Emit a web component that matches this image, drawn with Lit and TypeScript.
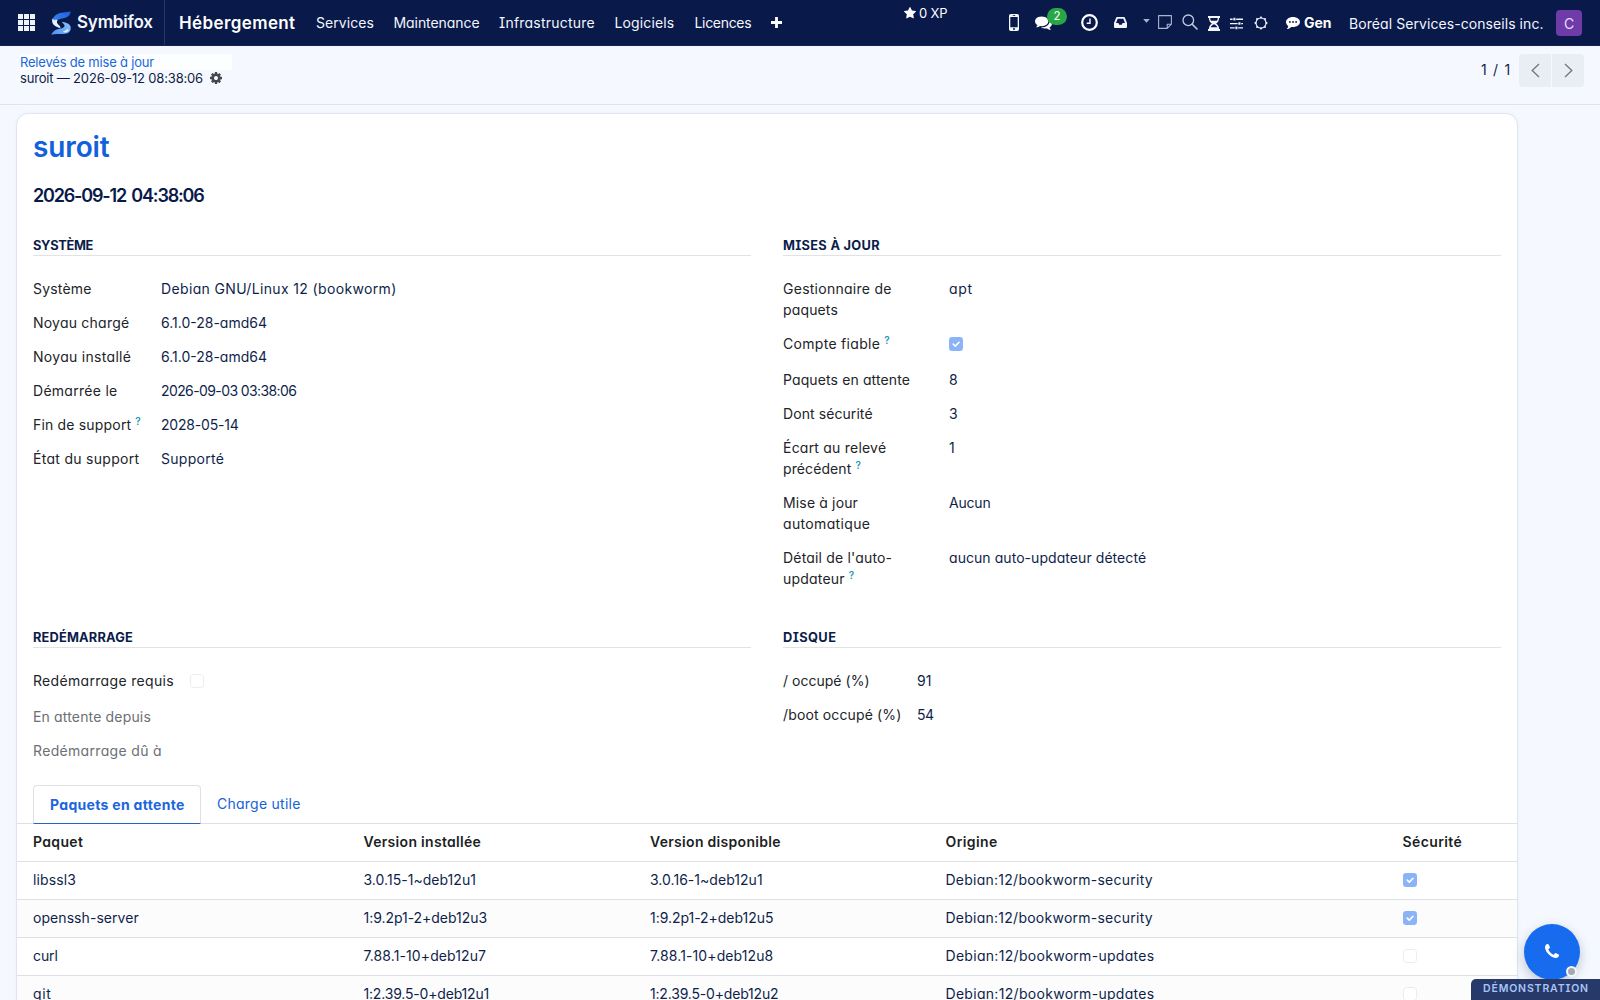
import { LitElement, html, css, svg, nothing, TemplateResult } from "lit";
import { customElement, property } from "lit/decorators.js";
import { styleMap } from "lit/directives/style-map.js";

/** A run of text with its own tracking, in pixels. */
type Run = [text: string, tracking: number];
interface Field { label: Run[]; value?: Run; check?: boolean; help?: boolean; muted?: boolean; }

const run = ([text, tracking]: Run) =>
  html`<span style=${styleMap({ letterSpacing: `${tracking}px` })}>${text}</span>`;

const SYSTEM: Field[] = [
  { label: [["Système", 0.2]], value: ["Debian GNU/Linux 12 (bookworm)", 0.36] },
  { label: [["Noyau chargé", 0.22]], value: ["6.1.0-28-amd64", 0] },
  { label: [["Noyau installé", 0.3]], value: ["6.1.0-28-amd64", 0] },
  { label: [["Démarrée le", 0.28]], value: ["2026-09-03 03:38:06", -0.6] },
  { label: [["Fin de support", 0.18]], value: ["2028-05-14", -0.2], help: true },
  { label: [["État du support", 0.29]], value: ["Supporté", 0.3] },
];
const UPDATES: Field[] = [
  { label: [["Gestionnaire de", 0.26], ["paquets", 0.14]], value: ["apt", 0.7] },
  { label: [["Compte fiable", 0.3]], check: true, help: true },
  { label: [["Paquets en attente", 0.12]], value: ["8", 0] },
  { label: [["Dont sécurité", 0.08]], value: ["3", 0] },
  { label: [["Écart au relevé", 0.22], ["précédent", 0.1]], value: ["1", 0], help: true },
  { label: [["Mise à jour", 0.15], ["automatique", 0.34]], value: ["Aucun", -0.2] },
  { label: [["Détail de l'auto-", 0.18], ["updateur", 0.2]], value: ["aucun auto-updateur détecté", 0.06], help: true },
];
const REBOOT: Field[] = [
  { label: [["Redémarrage requis", 0.32]], check: false },
  { label: [["En attente depuis", 0.16]], muted: true },
  { label: [["Redémarrage dû à", 0.33]], muted: true },
];
const DISK: Field[] = [
  { label: [["/ occupé (%)", 0.02]], value: ["91", 0] },
  { label: [["/boot occupé (%)", 0.14]], value: ["54", -0.4] },
];
const PACKAGES: { cells: Run[]; security: boolean }[] = [
  { cells: [["libssl3", 0.12], ["3.0.15-1~deb12u1", 0.03], ["3.0.16-1~deb12u1", 0.03], ["Debian:12/bookworm-security", 0.25]], security: true },
  { cells: [["openssh-server", 0.06], ["1:9.2p1-2+deb12u3", -0.04], ["1:9.2p1-2+deb12u5", -0.04], ["Debian:12/bookworm-security", 0.25]], security: true },
  { cells: [["curl", -0.1], ["7.88.1-10+deb12u7", 0.1], ["7.88.1-10+deb12u8", 0.1], ["Debian:12/bookworm-updates", 0.3]], security: false },
  { cells: [["git", 0.6], ["1:2.39.5-0+deb12u1", -0.18], ["1:2.39.5-0+deb12u2", -0.18], ["Debian:12/bookworm-updates", 0.3]], security: false },
];

const STAR = "M1728 647q0 22-26 48l-363 354 86 500q1 7 1 20 0 21-10.5 35.5t-30.5 14.5q-19 0-40-12l-449-236-449 236q-22 12-40 12-21 0-31.5-14.5t-10.5-35.5q0-6 2-20l86-500-364-354q-25-27-25-48 0-37 56-46l502-73 225-455q19-41 49-41t49 41l225 455 502 73q56 9 56 46z";
const COMMENTS = "M1408 768q0 139-94 257t-256.5 186.5-353.5 68.5q-86 0-176-16-124 88-278 128-36 9-86 16h-3q-11 0-20.5-8t-11.5-21q-1-3-1-6.5t.5-6.5 2-6l2.5-5 3.5-5.5 4-5 4.5-5 4-4.5q5-6 23-25t26-29.5 22.5-29 25-38.5 20.5-44q-124-72-195-177t-71-224q0-139 94-257t256.5-186.5 353.5-68.5 353.5 68.5 256.5 186.5 94 257zm384 256q0 120-71 224.5t-195 176.5q10 24 20.5 44t25 38.5 22.5 29 26 29.5 23 25q1 1 4 4.5t4.5 5 4 5 3.5 5.5l2.5 5 2 6 .5 6.5-1 6.5q-3 14-13 22t-22 7q-50-7-86-16-154-40-278-128-90 16-176 16-271 0-472-132 58 4 88 4 161 0 309-45t264-129q125-92 192-212t67-254q0-77-23-152 129 71 204 178t75 230z";
const COG = "M1152 896q0-106-75-181t-181-75-181 75-75 181 75 181 181 75 181-75 75-181zm512-109v222q0 12-8 23t-20 13l-185 28q-19 54-39 91 35 50 107 138 10 12 10 25t-9 23q-27 37-99 108t-94 71q-12 0-26-9l-138-108q-44 23-91 38-16 136-29 186-7 28-36 28h-222q-14 0-24.5-8.5t-11.5-21.5l-28-184q-49-16-90-37l-141 107q-10 9-25 9-14 0-25-11-126-114-165-168-7-10-7-23 0-12 8-23 15-21 51-66.5t54-70.5q-27-50-41-99l-183-27q-13-2-21-12.5t-8-23.5v-222q0-12 8-23t19-13l186-28q14-46 39-92-40-57-107-138-10-12-10-24 0-10 9-23 26-36 98.5-107.5t94.5-71.5q13 0 26 10l138 107q44-23 91-38 16-136 29-186 7-28 36-28h222q14 0 24.5 8.5t11.5 21.5l28 184q49 16 90 37l142-107q9-9 24-9 13 0 25 10 129 119 165 170 7 8 7 22 0 12-8 23-15 21-51 66.5t-54 70.5q26 50 41 98l183 28q13 2 21 12.5t8 23.5z";
const PHONE = "M1600 1240q0 27-10 70.5t-21 68.5q-21 50-122 106-94 51-186 51-27 0-53-3.5t-57.5-12.5-47-14.5-55.5-20.5-49-18q-98-35-175-83-127-79-264-216t-216-264q-48-77-83-175-3-9-18-49t-20.5-55.5-14.5-47-12.5-57.5-3.5-53q0-92 51-186 56-101 106-122 25-11 68.5-21t70.5-10q14 0 21 3 18 6 53 76 11 19 30 54t35 63.5 31 53.5q3 4 17.5 25t21.5 35.5 7 28.5q0 20-28.5 50t-62 55-62 53-28.5 46q0 9 5 22.5t8.5 20.5 14 24 11.5 19q76 137 174 235t235 174q2 1 19 11.5t24 14 20.5 8.5 22.5 5q18 0 46-28.5t53-62 55-62 50-28.5q14 0 28.5 7t35.5 21.5 25 17.5q25 15 53.5 31t63.5 35 54 30q70 35 76 53 3 7 3 21z";

const icon = (cls: string, w: number, h: number, body: TemplateResult | unknown, box = `0 0 ${w} ${h}`) =>
  html`<svg class=${cls} width=${w} height=${h} viewBox=${box} fill="currentColor">${body}</svg>`;

const shared = css`
  * { box-sizing: border-box; }
  svg { display: block; flex: none; }
  span, a { white-space: nowrap; }
`;

@customElement("check-box")
class CheckBox extends LitElement {
  @property({ type: Boolean }) on = false;
  static styles = css`
    :host { display: block; width: 14px; height: 14px; }
    svg { display: block; }
  `;
  render() {
    return this.on
      ? html`<svg width="14" height="14"><rect width="14" height="14" rx="3.2" fill="#8bb3f7"/><path d="M4.2 7.1 6.3 9.1 10 5.3" fill="none" stroke="#fff" stroke-width="1.6" stroke-linecap="round" stroke-linejoin="round"/></svg>`
      : html`<svg width="14" height="14"><rect x=".5" y=".5" width="13" height="13" rx="3" fill="#fff" stroke="#ececef"/></svg>`;
  }
}

@customElement("top-bar")
class TopBar extends LitElement {
  static styles = [shared, css`
    :host { display: block; color: #f3f6fc; }
    .bar { display: flex; height: 46px; background: #08194a; border-bottom: 1px solid #14244f; }
    .brand { display: flex; width: 165px; padding-left: 18px; border-right: 1px solid #26386a; }
    .apps { margin: 14px 16px 0 0; color: #eef1f8; }
    .logo { margin: 11px 6px 0 0; }
    .name { font-size: 17px; font-weight: 600; line-height: 22px; padding-top: 11px; }
    .menu { display: flex; flex: 1; line-height: 46px; }
    .menu span { flex: none; }
    .section { width: 151px; padding-left: 14px; font-size: 17px; font-weight: 600; color: #fff; }
    .plus { margin-top: 17px; color: #fff; }
    .m1 { width: 77.500px; } .m2 { width: 105.500px; } .m3 { width: 115.500px; } .m4 { width: 80px; } .m5 { width: 76px; }
    .tray { display: flex; align-items: center; padding-right: 18px; }
    .xp { display: flex; align-self: flex-start; width: 105px; gap: 3px; padding-top: 5px; font-size: 13px; line-height: 17px; color: #fff; }
    .xp svg { margin-top: 2px; }
    .chat { position: relative; width: 46px; color: #fff; }
    .count { position: absolute; left: 12px; top: -6px; width: 20px; height: 17px; border-radius: 9px; background: #28a745; font: 11.5px/17px Inter, sans-serif; text-align: center; }
    .mobile { margin-right: 16px; }
    .clock { margin-right: 16px; color: #fff; }
    .inbox { margin-right: 16px; }
    .caret { margin: 0 8px 3px 0; color: #a9b4cf; }
    .note { margin: 0 10px 2px 0; color: #a9b4cf; }
    .find { margin: 0 10px 2px 0; color: #c3cbe0; }
    .glass { margin: 1px 10px 0 0; }
    .tune { margin: 1px 11px 0 0; }
    .sun { margin: 1px 18px 0 0; }
    .talk { margin: 1px 4px 0 0; color: #fff; }
    .gen { width: 45px; font-weight: 700; padding-bottom: 1px; color: #fff; }
    .org { width: 207px; padding-top: 1px; }
    .avatar { width: 26px; height: 26px; border-radius: 4px; background: #6f3ba8; font: 14px/27px Inter, sans-serif; text-align: center; color: #eadcf8; }
  `];
  render() {
    return html`
      <nav class="bar">
        <div class="brand">
          ${icon("apps", 17, 17, [0, 6, 12].map(y => [0, 6, 12].map(x => svg`<rect x=${x} y=${y} width="5" height="5"/>`)))}
          ${icon("logo", 20, 24, svg`
            <defs><linearGradient id="a" x1="0" y1="1" x2="1" y2="0"><stop offset="0" stop-color="#3d8bf5"/><stop offset="1" stop-color="#1f5fe0"/></linearGradient>
            <linearGradient id="b" x1="0" y1="1" x2="1" y2="0"><stop offset="0" stop-color="#4a92f2"/><stop offset="1" stop-color="#8fc0fb"/></linearGradient></defs>
            <path fill="url(#a)" d="M19.8 .2C15 1.6 9.5.8 5.500 3.500 1.500 6.200.4 10.500 3 14c1.500 1.800 4 2.400 6 3.500C7 14 4.800 11.500 6.500 9.300c1.500-1.900 5-1.800 8-2.600 3-.9 4.800-3.200 5.300-6.500z"/>
            <path fill="#e8f2ff" d="M1.400 7.500C.8 10 1.200 12.500 3 14c1.700 1.500 4.500 2 6.500 3.500.3-1.500-.8-2.600-2-3.700-1.300-1.200-2.300-2.700-1-4.500L4.800 8.600 3.700 9.400z"/>
            <path fill="url(#b)" d="M10.500 11c4 .2 8 1.400 9 4.600 1 3.400-1.300 6.700-5.500 7.200-4.500.6-9-.6-13.800 1 1.600-3.700 4.300-5.400 7.800-5.900 3.500-.6 5.800-1.200 5.500-3.200-.2-1.600-1.700-2.600-3-3.700z"/>
            <path fill="#dcebff" d="M11.500 20.500c2-.2 4-1.200 4.800-3l.7 1.400 1.500-.6c-1 2.600-3.200 3.400-5 3.300z"/>`)}
          <span class="name">${run(["Symbifox", -0.2])}</span>
        </div>
        <div class="menu">
          <span class="section">${run(["Hébergement", 0.39])}</span>
          <span class="m1">${run(["Services", 0.07])}</span>
          <span class="m2">${run(["Maintenance", -0.07])}</span>
          <span class="m3">${run(["Infrastructure", 0.22])}</span>
          <span class="m4">${run(["Logiciels", 0.12])}</span>
          <span class="m5">${run(["Licences", -0.32])}</span>
          ${icon("plus", 11, 11, svg`<path d="M4.100 0h2.800v4.100H11v2.800H6.900V11H4.100V6.900H0V4.100h4.100z"/>`)}
        </div>
        <div class="tray">
          <span class="xp">${icon("", 12, 12, svg`<path d=${STAR}/>`, "64 64 1664 1600")}${run(["0 XP", -0.2])}</span>
          ${icon("mobile", 10, 17, svg`<path fill-rule="evenodd" d="M1.800 0h6.400Q10 0 10 1.800v13.400Q10 17 8.200 17H1.800Q0 17 0 15.200V1.800Q0 0 1.800 0zM1.300 2.900v10.300h7.400V2.900zM3.700 1.100v.7h2.600v-.7zM5 14.100a1 1 0 1 0 0 2 1 1 0 0 0 0-2z"/>`)}
          <span class="chat">${icon("", 17, 17, svg`<path d=${COMMENTS}/>`, "0 0 1792 1792")}<span class="count">2</span></span>
          ${icon("clock", 17, 17, svg`<circle cx="8.500" cy="8.500" r="7.300" fill="none" stroke="currentColor" stroke-width="2.200"/><path d="M9 4.500V9.300H5.700" fill="none" stroke="currentColor" stroke-width="1.400"/>`)}
          ${icon("inbox", 13, 11, svg`<path fill-rule="evenodd" d="M3.200 0h6.600q.8 0 1.100.8L13 6v4q0 1-1 1H1q-1 0-1-1V6L2.100.8Q2.400 0 3.200 0zM3.700 1.700 2 6h2.400l.8 1.700h2.600L8.600 6H11L9.300 1.700z"/>`)}
          ${icon("caret", 7, 4, svg`<path d="M.2 0h6.600L3.500 3.700z"/>`)}
          ${icon("note", 14, 14, svg`<path d="M.6.6h12.800v8.600L9.200 13.400H.6z M13.400 9.200H9.200v4.200" fill="none" stroke="currentColor" stroke-width="1.100" stroke-linejoin="round"/>`)}
          ${icon("find", 16, 16, svg`<circle cx="6.300" cy="6.300" r="5.300" fill="none" stroke="currentColor" stroke-width="1.300"/><path d="M10.200 10.200 15 15" stroke="currentColor" stroke-width="1.600" stroke-linecap="round"/>`)}
          ${icon("glass", 12, 15, svg`<path fill-rule="evenodd" d="M0 0h12v1.900h-.9c0 2.700-1.400 4.500-3 5.600 1.600 1.100 3 2.900 3 5.600h.9V15H0v-1.900h.9c0-2.700 1.400-4.500 3-5.600C2.300 6.400.9 4.600.9 1.900H0zM2.200 1.900c0 1.200.3 2 .8 2.800h6c.5-.8.8-1.600.8-2.800zM6 8.300c-1.500.5-2.700 1.500-3.300 3h6.600c-.6-1.500-1.800-2.500-3.300-3z"/>`)}
          ${icon("tune", 13, 13, svg`<path d="M0 1.600h13v1.300H0zM0 5.900h13v1.300H0zM0 10.200h13v1.300H0z"/><path stroke="#08194a" stroke-width=".7" d="M3 .6h2.800v3.200H3zM8 4.900h2.800v3.200H8zM5 9.200h2.800v3.200H5z"/>`)}
          ${icon("sun", 14, 14, svg`<circle cx="7" cy="7" r="5" fill="none" stroke="currentColor" stroke-width="1.100"/>${[0, 45, 90, 135, 180, 225, 270, 315].map(a => svg`<path d="M5.500 2.200 7 0 8.500 2.200z" transform="rotate(${a} 7 7)"/>`)}`)}
          ${icon("talk", 14, 12, svg`<path fill-rule="evenodd" d="M7 0c3.900 0 7 2.200 7 5s-3.100 5-7 5c-.6 0-1.200 0-1.700-.1C4 11.100 2.400 11.900.8 12c.9-.9 1.400-1.800 1.500-3C.9 8.100 0 6.600 0 5c0-2.800 3.100-5 7-5zM3.900 4.100a.9.9 0 1 0 0 1.800.9.900 0 0 0 0-1.800zM7 4.100a.9.900 0 1 0 0 1.800.9.900 0 0 0 0-1.800zM10.100 4.100a.9.900 0 1 0 0 1.800.9.900 0 0 0 0-1.800z"/>`)}
          <span class="gen">Gen</span>
          <span class="org">${run(["Boréal Services-conseils inc.", 0.07])}</span>
          <span class="avatar">C</span>
        </div>
      </nav>`;
  }
}

@customElement("field-group")
class FieldGroup extends LitElement {
  @property({ attribute: false }) heading: Run = ["", 0];
  @property({ attribute: false }) fields: Field[] = [];
  @property({ type: Number }) labelWidth = 112;
  static styles = [shared, css`
    :host { display: block; }
    .title { height: 22px; border-bottom: 1px solid #dfe2e8; font-size: 12.800px; font-weight: 700; line-height: 23px; color: #0a1c4a; }
    .fields { display: flex; flex-direction: column; gap: 13px; padding-top: 22px; }
    .row { display: flex; gap: 16px; line-height: 21px; color: #0f1f4b; }
    .tall { min-height: 23px; }
    .label { flex: none; color: #212429; }
    .label span { display: inline-block; }
    .muted { color: #6c6f75; }
    .label .help { font-size: 10px; font-weight: 600; line-height: 0; vertical-align: 5px; margin-left: 4px; color: #2596b8; }
    check-box { margin-top: 4px; }
  `];
  render() {
    return html`
      <div class="title">${run(this.heading)}</div>
      <div class="fields">
        ${this.fields.map(f => html`
          <div class="row ${f.check === undefined ? "" : "tall"}">
            <div class="label ${f.muted ? "muted" : ""}" style=${styleMap({ width: `${this.labelWidth}px` })}>
              ${f.label.map((line, i) => html`<div>${run(line)}${f.help && i === f.label.length - 1 ? html`<span class="help">?</span>` : nothing}</div>`)}
            </div>
            ${f.check === undefined ? (f.value ? run(f.value) : nothing) : html`<check-box ?on=${f.check}></check-box>`}
          </div>`)}
      </div>`;
  }
}

@customElement("app-root")
class AppRoot extends LitElement {
  static styles = [shared, css`
    :host {
      display: block; position: relative; height: 1000px; overflow: hidden; background: #f5f9ff;
      font: 14px/21px Inter, "Open Sans", sans-serif; font-feature-settings: "cv11", "cv08"; color: #0f1f4b;
    }
    .panel { display: flex; justify-content: space-between; height: 59px; padding: 8px 16px 0 20px; border-bottom: 1px solid #dfe3f3; }
    .crumbs { font-size: 13px; line-height: 16px; color: #101e46; }
    .parent { display: block; width: 212px; background: #fcfeff; color: #1b66dd; }
    .current { display: flex; gap: 7px; color: #101e46; }
    .current svg { margin-top: 2px; color: #45484f; }
    .pager { display: flex; align-items: flex-start; gap: 1px; }
    .range { padding: 5px 6.500px 0 0; color: #111f47; }
    .step { display: grid; place-items: center; width: 32px; height: 33px; background: #e9edf4; color: #71757e; }
    .prev { border-radius: 4px 0 0 4px; } .next { border-radius: 0 4px 4px 0; }
    .card { width: 1502px; height: 1000px; margin: 8px 0 0 16px; border: 1px solid #dfe3f2; border-radius: 12px; background: #fff; box-shadow: 0 0 4px #1b3a8a0c; }
    .body { padding: 13px 16px 0; }
    .host { margin: 0; font-size: 28px; font-weight: 600; line-height: 40px; color: #1160dc; }
    .date { margin: 14px 0 0; font-size: 18px; font-weight: 600; line-height: 30px; word-spacing: 2px; color: #08194a; }
    .groups { display: grid; grid-template-columns: 718px 718px; column-gap: 32px; }
    .first { margin-top: 23px; height: 392px; }
    .second { height: 159px; }
    .tabs { display: flex; height: 38px; padding-left: 16px; }
    .tab { padding: 0 16px; line-height: 38px; color: #1562d8; }
    .active { width: 168px; border: 1px solid #dde0e6; border-bottom: 1px solid #2a62c0; border-radius: 4px 4px 0 0; font-weight: 700; line-height: 37px; color: #1a66dd; margin-bottom: -1px; z-index: 1; }
    .table { border-top: 1px solid #dde0e6; }
    .line { display: grid; grid-template-columns: 330.500px 286.500px 295.500px 457px 1fr; height: 38px; padding-left: 16px; line-height: 35px; border-bottom: 1px solid #dde0e6; }
    .head { font-weight: 600; color: #1c1f24; }
    .line:nth-child(odd):not(.head) { background: #fcfcfd; }
    .line check-box { margin-top: 11px; }
    .call { position: absolute; left: 1524px; top: 924px; width: 56px; height: 56px; border-radius: 50%; background: #166bee; color: #fff; display: grid; place-items: center; box-shadow: 0 4px 12px #0b1f4a40; }
    .call svg { margin: 0 1px 2px 0; }
    .state { position: absolute; left: 42px; top: 42px; width: 11px; height: 11px; border-radius: 50%; background: #a3a8b3; border: 2px solid #f4f6fa; }
    .demo { position: absolute; right: 0; bottom: 0; width: 129px; height: 21px; padding-left: 12px; border-radius: 5px 0 0; background: #263968; color: #a8c5f8; font-size: 10.500px; font-weight: 600; line-height: 20px; }
  `];
  render() {
    return html`
      <top-bar></top-bar>
      <header class="panel">
        <div class="crumbs">
          <a class="parent">${run(["Relevés de mise à jour", -0.2])}</a>
          <div class="current">${run(["suroit — 2026-09-12 08:38:06", -0.18])}${icon("", 12, 12, svg`<path d=${COG}/>`, "128 128 1536 1536")}</div>
        </div>
        <div class="pager">
          <span class="range">${run(["1 / 1", 1.24])}</span>
          <span class="step prev">${icon("", 9, 15, svg`<path d="M8 1 1.200 7.500 8 14" fill="none" stroke="currentColor" stroke-width="1.300"/>`)}</span>
          <span class="step next">${icon("", 9, 15, svg`<path d="M1 1 7.800 7.500 1 14" fill="none" stroke="currentColor" stroke-width="1.300"/>`)}</span>
        </div>
      </header>
      <main class="card">
        <div class="body">
          <h1 class="host">${run(["suroit", -0.13])}</h1>
          <h2 class="date">${run(["2026-09-12 04:38:06", -1.18])}</h2>
          <div class="groups first">
            <field-group .heading=${["SYSTÈME", -0.3] as Run} .fields=${SYSTEM} .labelWidth=${112}></field-group>
            <field-group .heading=${["MISES À JOUR", 0.3] as Run} .fields=${UPDATES} .labelWidth=${150}></field-group>
          </div>
          <div class="groups second">
            <field-group .heading=${["REDÉMARRAGE", 0.19] as Run} .fields=${REBOOT} .labelWidth=${141}></field-group>
            <field-group .heading=${["DISQUE", 0.42] as Run} .fields=${DISK} .labelWidth=${118}></field-group>
          </div>
        </div>
        <div class="tabs">
          <span class="tab active">${run(["Paquets en attente", 0.31])}</span>
          <span class="tab">${run(["Charge utile", 0.25])}</span>
        </div>
        <div class="table">
          <div class="line head">${([["Paquet", 0.35], ["Version installée", 0.3], ["Version disponible", 0.3], ["Origine", 0.4], ["Sécurité", 0.4]] as Run[]).map(run)}</div>
          ${PACKAGES.map(p => html`<div class="line">${p.cells.map(run)}<check-box ?on=${p.security}></check-box></div>`)}
        </div>
      </main>
      <div class="call">${icon("", 14, 14, svg`<path d=${PHONE}/>`, "192 128 1408 1408")}<span class="state"></span></div>
      <div class="demo">${run(["DÉMONSTRATION", 0.85])}</div>`;
  }
}
